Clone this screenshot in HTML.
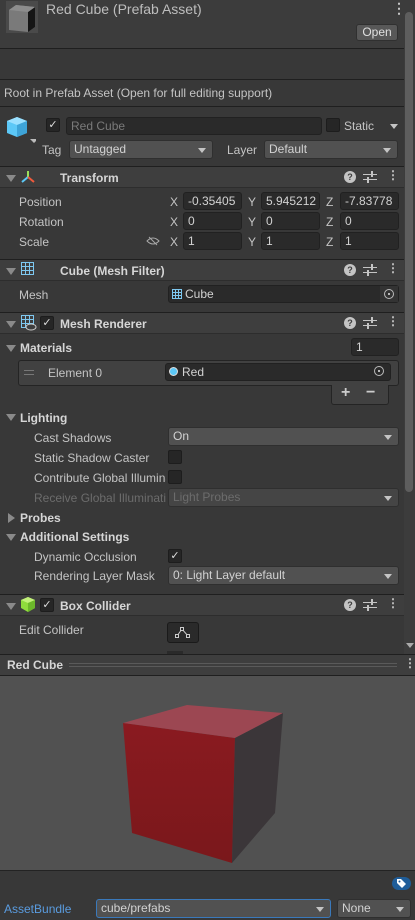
<!DOCTYPE html>
<html><head><meta charset="utf-8"><style>
*{box-sizing:border-box;margin:0;padding:0}
body{width:415px;height:920px;background:#383838;font-family:"Liberation Sans",sans-serif;font-size:12px;color:#c4c4c4;position:relative;overflow:hidden}
.a{position:absolute}
.t{position:absolute;white-space:nowrap}
.f{position:absolute;background:#2a2a2a;border:1px solid #212121;border-radius:3px;height:18px;padding:1px 4px;white-space:nowrap;overflow:hidden;color:#d2d2d2}
.dd{position:absolute;background:#515151;border:1px solid #2f2f2f;border-radius:3px;height:19px;padding:1px 4px;color:#d2d2d2;white-space:nowrap}
.dd:after{content:"";position:absolute;right:6px;top:7px;border-left:4px solid transparent;border-right:4px solid transparent;border-top:5px solid #c4c4c4}
.hdr{position:absolute;left:0;width:404px;height:22px;background:#3e3e3e;border-top:1px solid #1f1f1f;border-bottom:1px solid #2d2d2d}
.tri{position:absolute;border-left:5px solid transparent;border-right:5px solid transparent;border-top:7px solid #8a8a8a}
.trir{position:absolute;border-top:5px solid transparent;border-bottom:5px solid transparent;border-left:7px solid #8a8a8a}
.cb{position:absolute;width:14px;height:14px;background:#262626;border:1px solid #1d1d1d;border-radius:2px;color:#ddd;font-size:11px;line-height:12px;text-align:center}
.b{font-weight:bold;color:#d6d6d6}
.q{position:absolute;width:12px;height:12px;border-radius:6px;background:#c4c4c4;color:#3e3e3e;font-size:9px;font-weight:bold;text-align:center;line-height:12px}
.sl{position:absolute;width:14px;height:12px}
</style></head><body>
<div class="a" style="left:0;top:0;width:404px;height:49px;background:#3c3c3c;border-bottom:1px solid #1f1f1f"></div>
<div class="a" style="left:6px;top:1px;width:32px;height:32px;background:#4a4a4a"></div>
<svg class="a" style="left:6px;top:1px" width="32" height="32"><polygon points="3,9 10,4 29,6 29,26 22,31 3,29" fill="#7a7a7a"/><polygon points="22,11 29,6 29,26 22,31" fill="#151515"/><polygon points="3,9 10,4 29,6 22,11" fill="#8d8d8d"/></svg>
<div class="t" style="left:46px;top:1px;font-size:14px;color:#bdbdbd">Red Cube (Prefab Asset)</div>
<div class="t" style="left:392px;top:0px;font-size:14px;color:#c4c4c4;font-weight:bold">⋮</div>
<div class="a" style="left:356px;top:24px;width:42px;height:17px;background:#585858;border:1px solid #303030;border-radius:3px;color:#e0e0e0;text-align:center;line-height:15px">Open</div>
<div class="a" style="left:0;top:79px;width:404px;height:1px;background:#1f1f1f"></div>
<div class="t" style="left:4px;top:86px">Root in Prefab Asset (Open for full editing support)</div>
<div class="a" style="left:0;top:106px;width:404px;height:1px;background:#1f1f1f"></div>
<svg class="a" style="left:6px;top:116px" width="30" height="28"><polygon points="11,1 21,5 21,17 11,21 1,17 1,5" fill="#5cc8f7"/><polygon points="11,1 21,5 11,9 1,5" fill="#9be0ff"/><polygon points="11,9 21,5 21,17 11,21" fill="#3ea4d8"/><polygon points="24,23 32,23 28,27" fill="#bbb"/></svg>
<div class="cb" style="left:46px;top:118px">✓</div>
<div class="f" style="left:66px;top:117px;width:256px;color:#7a7a7a">Red Cube</div>
<div class="cb" style="left:326px;top:118px"></div>
<div class="t" style="left:344px;top:119px">Static</div>
<div class="a" style="left:390px;top:124px;border-left:4px solid transparent;border-right:4px solid transparent;border-top:5px solid #c4c4c4"></div>
<div class="t" style="left:42px;top:143px">Tag</div>
<div class="dd" style="left:69px;top:140px;width:144px">Untagged</div>
<div class="t" style="left:227px;top:143px">Layer</div>
<div class="dd" style="left:264px;top:140px;width:134px">Default</div>
<!-- Transform -->
<div class="hdr" style="top:166px"></div>
<div class="tri" style="left:6px;top:175px"></div>
<svg class="a" style="left:20px;top:170px" width="16" height="14"><line x1="8" y1="7" x2="8" y2="1" stroke="#9be05a" stroke-width="2"/><line x1="8" y1="7" x2="2" y2="12" stroke="#5cc8f7" stroke-width="2"/><line x1="8" y1="7" x2="14" y2="12" stroke="#f05a3c" stroke-width="2"/></svg>
<div class="t b" style="left:60px;top:171px">Transform</div>
<div class="q" style="left:344px;top:171px">?</div>
<svg class="sl" style="left:363px;top:171px"><path d="M0 3.5H14M0 8.5H14" stroke="#c4c4c4"/><rect x="8" y="0" width="2" height="6" fill="#c4c4c4"/><rect x="4" y="6" width="2" height="6" fill="#c4c4c4"/></svg>
<div class="t" style="left:387px;top:168px;font-weight:bold">⋮</div>
<div class="t" style="left:19px;top:195px">Position</div>
<div class="t" style="left:19px;top:215px">Rotation</div>
<div class="t" style="left:19px;top:235px">Scale</div>
<svg class="a" style="left:146px;top:236px" width="14" height="10"><path d="M1 5Q7 -1 13 5Q7 11 1 5Z" fill="none" stroke="#aaa"/><line x1="3" y1="1" x2="11" y2="9" stroke="#aaa"/></svg>
<div class="t" style="left:170px;top:195px">X</div><div class="f" style="left:183px;top:192px;width:59px">-0.35405</div>
<div class="t" style="left:248px;top:195px">Y</div><div class="f" style="left:261px;top:192px;width:59px">5.945212</div>
<div class="t" style="left:326px;top:195px">Z</div><div class="f" style="left:340px;top:192px;width:59px">-7.83778</div>
<div class="t" style="left:170px;top:215px">X</div><div class="f" style="left:183px;top:212px;width:59px">0</div>
<div class="t" style="left:248px;top:215px">Y</div><div class="f" style="left:261px;top:212px;width:59px">0</div>
<div class="t" style="left:326px;top:215px">Z</div><div class="f" style="left:340px;top:212px;width:59px">0</div>
<div class="t" style="left:170px;top:235px">X</div><div class="f" style="left:183px;top:232px;width:59px">1</div>
<div class="t" style="left:248px;top:235px">Y</div><div class="f" style="left:261px;top:232px;width:59px">1</div>
<div class="t" style="left:326px;top:235px">Z</div><div class="f" style="left:340px;top:232px;width:59px">1</div>
<!-- Mesh Filter -->
<div class="hdr" style="top:259px"></div>
<div class="tri" style="left:6px;top:268px"></div>
<svg class="a" style="left:21px;top:262px" width="14" height="14"><rect x="0.5" y="0.5" width="12" height="12" fill="none" stroke="#7ec8f0"/><path d="M4.5 0.5V12.5M8.5 0.5V12.5M0.5 4.5H12.5M0.5 8.5H12.5" stroke="#7ec8f0"/></svg>
<div class="t b" style="left:60px;top:264px">Cube (Mesh Filter)</div>
<div class="q" style="left:344px;top:264px">?</div>
<svg class="sl" style="left:363px;top:264px"><path d="M0 3.5H14M0 8.5H14" stroke="#c4c4c4"/><rect x="8" y="0" width="2" height="6" fill="#c4c4c4"/><rect x="4" y="6" width="2" height="6" fill="#c4c4c4"/></svg>
<div class="t" style="left:387px;top:261px;font-weight:bold">⋮</div>
<div class="t" style="left:19px;top:288px">Mesh</div>
<div class="f" style="left:168px;top:285px;width:231px;padding-left:16px">Cube</div>
<svg class="a" style="left:172px;top:289px" width="10" height="10"><rect x="0.5" y="0.5" width="9" height="9" fill="none" stroke="#7ec8f0"/><path d="M3.5 0.5V9.5M6.5 0.5V9.5M0.5 3.5H9.5M0.5 6.5H9.5" stroke="#7ec8f0"/></svg>
<div class="a" style="left:380px;top:286px;width:18px;height:16px;background:#333"></div>
<div class="a" style="left:384px;top:289px;width:10px;height:10px;border:1px solid #bbb;border-radius:5px"></div>
<div class="a" style="left:388px;top:293px;width:2px;height:2px;background:#bbb"></div>
<!-- Mesh Renderer -->
<div class="hdr" style="top:312px"></div>
<div class="tri" style="left:6px;top:321px"></div>
<svg class="a" style="left:21px;top:315px" width="16" height="16"><rect x="0.5" y="0.5" width="12" height="12" fill="none" stroke="#7ec8f0"/><path d="M4.5 0.5V12.5M8.5 0.5V12.5M0.5 4.5H12.5M0.5 8.5H12.5" stroke="#7ec8f0"/><ellipse cx="10" cy="12" rx="5" ry="3" fill="#3e3e3e" stroke="#ccc"/></svg>
<div class="cb" style="left:40px;top:316px">✓</div>
<div class="t b" style="left:60px;top:317px">Mesh Renderer</div>
<div class="q" style="left:344px;top:317px">?</div>
<svg class="sl" style="left:363px;top:317px"><path d="M0 3.5H14M0 8.5H14" stroke="#c4c4c4"/><rect x="8" y="0" width="2" height="6" fill="#c4c4c4"/><rect x="4" y="6" width="2" height="6" fill="#c4c4c4"/></svg>
<div class="t" style="left:387px;top:314px;font-weight:bold">⋮</div>
<div class="tri" style="left:6px;top:345px"></div>
<div class="t b" style="left:20px;top:341px">Materials</div>
<div class="f" style="left:351px;top:338px;width:48px">1</div>
<div class="a" style="left:18px;top:360px;width:381px;height:26px;background:#414141;border:1px solid #242424;border-radius:3px"></div>
<div class="a" style="left:24px;top:370px;width:10px;height:1px;background:#777"></div>
<div class="a" style="left:24px;top:374px;width:10px;height:1px;background:#777"></div>
<div class="t" style="left:48px;top:366px">Element 0</div>
<div class="f" style="left:165px;top:363px;width:226px;padding-left:16px">Red</div>
<div class="a" style="left:169px;top:367px;width:9px;height:9px;border-radius:5px;background:#5cc8f7;border:1px solid #ddd"></div>
<div class="a" style="left:374px;top:366px;width:10px;height:10px;border:1px solid #bbb;border-radius:5px"></div>
<div class="a" style="left:378px;top:370px;width:2px;height:2px;background:#bbb"></div>
<div class="a" style="left:331px;top:385px;width:58px;height:20px;background:#414141;border:1px solid #242424;border-top:none;border-radius:0 0 3px 3px"></div>
<div class="t" style="left:341px;top:384px;font-size:16px;font-weight:bold;color:#ccc">+</div>
<div class="t" style="left:366px;top:384px;font-size:16px;font-weight:bold;color:#ccc">−</div>
<div class="tri" style="left:6px;top:414px"></div>
<div class="t b" style="left:20px;top:411px">Lighting</div>
<div class="t" style="left:34px;top:431px">Cast Shadows</div>
<div class="dd" style="left:168px;top:427px;width:231px">On</div>
<div class="t" style="left:34px;top:451px">Static Shadow Caster</div>
<div class="cb" style="left:168px;top:450px"></div>
<div class="t" style="left:34px;top:471px;width:132px;overflow:hidden">Contribute Global Illumination</div>
<div class="cb" style="left:168px;top:470px"></div>
<div class="t" style="left:34px;top:491px;width:132px;overflow:hidden;color:#6c6c6c">Receive Global Illumination</div>
<div class="dd" style="left:168px;top:488px;width:231px;background:#454545;color:#6c6c6c">Light Probes</div>
<div class="trir" style="left:8px;top:513px"></div>
<div class="t b" style="left:20px;top:511px">Probes</div>
<div class="tri" style="left:6px;top:534px"></div>
<div class="t b" style="left:20px;top:530px">Additional Settings</div>
<div class="t" style="left:34px;top:550px">Dynamic Occlusion</div>
<div class="cb" style="left:168px;top:549px">✓</div>
<div class="t" style="left:34px;top:569px">Rendering Layer Mask</div>
<div class="dd" style="left:168px;top:566px;width:231px">0: Light Layer default</div>
<!-- Box Collider -->
<div class="hdr" style="top:594px"></div>
<div class="tri" style="left:6px;top:603px"></div>
<svg class="a" style="left:21px;top:597px" width="14" height="15"><polygon points="7,0 14,3 14,11 7,15 0,11 0,3" fill="#8fdc3c"/><polygon points="7,0 14,3 7,6 0,3" fill="#c2f07a"/><polygon points="7,6 14,3 14,11 7,15" fill="#6cb82a"/></svg>
<div class="cb" style="left:40px;top:598px">✓</div>
<div class="t b" style="left:60px;top:599px">Box Collider</div>
<div class="q" style="left:344px;top:599px">?</div>
<svg class="sl" style="left:363px;top:599px"><path d="M0 3.5H14M0 8.5H14" stroke="#c4c4c4"/><rect x="8" y="0" width="2" height="6" fill="#c4c4c4"/><rect x="4" y="6" width="2" height="6" fill="#c4c4c4"/></svg>
<div class="t" style="left:387px;top:596px;font-weight:bold">⋮</div>
<div class="t" style="left:19px;top:623px">Edit Collider</div>
<div class="a" style="left:167px;top:622px;width:32px;height:21px;background:#2a2a2a;border:1px solid #1a1a1a;border-radius:3px"></div>
<svg class="a" style="left:175px;top:626px" width="16" height="13"><path d="M2 10L7 3L13 10" fill="none" stroke="#ccc"/><rect x="0.5" y="8.5" width="3" height="3" fill="#2a2a2a" stroke="#ccc"/><rect x="5.5" y="1.5" width="3" height="3" fill="#2a2a2a" stroke="#ccc"/><rect x="11.5" y="8.5" width="3" height="3" fill="#2a2a2a" stroke="#ccc"/></svg>
<div class="a" style="left:167px;top:651px;width:16px;height:3px;background:#2a2a2a"></div>
<!-- scrollbar -->
<div class="a" style="left:404px;top:0;width:11px;height:654px;background:#3c3c3c"></div>
<div class="a" style="left:405px;top:12px;width:8px;height:480px;background:#5e5e5e;border-radius:4px"></div>
<div class="a" style="left:406px;top:643px;border-left:4px solid transparent;border-right:4px solid transparent;border-top:5px solid #aaa"></div>
<!-- preview header -->
<div class="a" style="left:0;top:654px;width:415px;height:22px;background:#3e3e3e;border-top:1px solid #1f1f1f;border-bottom:1px solid #1f1f1f"></div>
<div class="t b" style="left:7px;top:658px">Red Cube</div>
<div class="a" style="left:69px;top:663px;width:328px;height:1px;background:#5a5a5a"></div>
<div class="a" style="left:69px;top:666px;width:328px;height:1px;background:#5a5a5a"></div>
<div class="t" style="left:404px;top:656px;font-weight:bold">⋮</div>
<div class="a" style="left:0;top:676px;width:415px;height:195px;background:#515151;border-bottom:1px solid #232323"></div>
<svg class="a" style="left:0;top:676px" width="415" height="195">
<defs><linearGradient id="fr" x1="0" y1="0" x2="0" y2="1"><stop offset="0" stop-color="#8a1a20"/><stop offset="1" stop-color="#7a181b"/></linearGradient></defs>
<polygon points="123,47 235,62 232,187 132,157" fill="url(#fr)"/>
<polygon points="123,47 187,29 283,37 235,62" fill="#9c4752"/>
<polygon points="235,62 283,37 275,137 232,187" fill="#3b3639"/>
</svg>
<div class="a" style="left:392px;top:877px;width:19px;height:13px;background:#1f5d99;border-radius:7px"></div>
<svg class="a" style="left:396px;top:878px" width="11" height="11"><path d="M1 1H5L10 6L6 10L1 5Z" fill="#fff"/><circle cx="3.5" cy="3.5" r="1" fill="#1f5d99"/></svg>
<div class="t" style="left:4px;top:902px;color:#5a9ce0">AssetBundle</div>
<div class="dd" style="left:96px;top:899px;width:235px;border-color:#3a79bb">cube/prefabs</div>
<div class="dd" style="left:337px;top:899px;width:74px">None</div>
</body></html>
